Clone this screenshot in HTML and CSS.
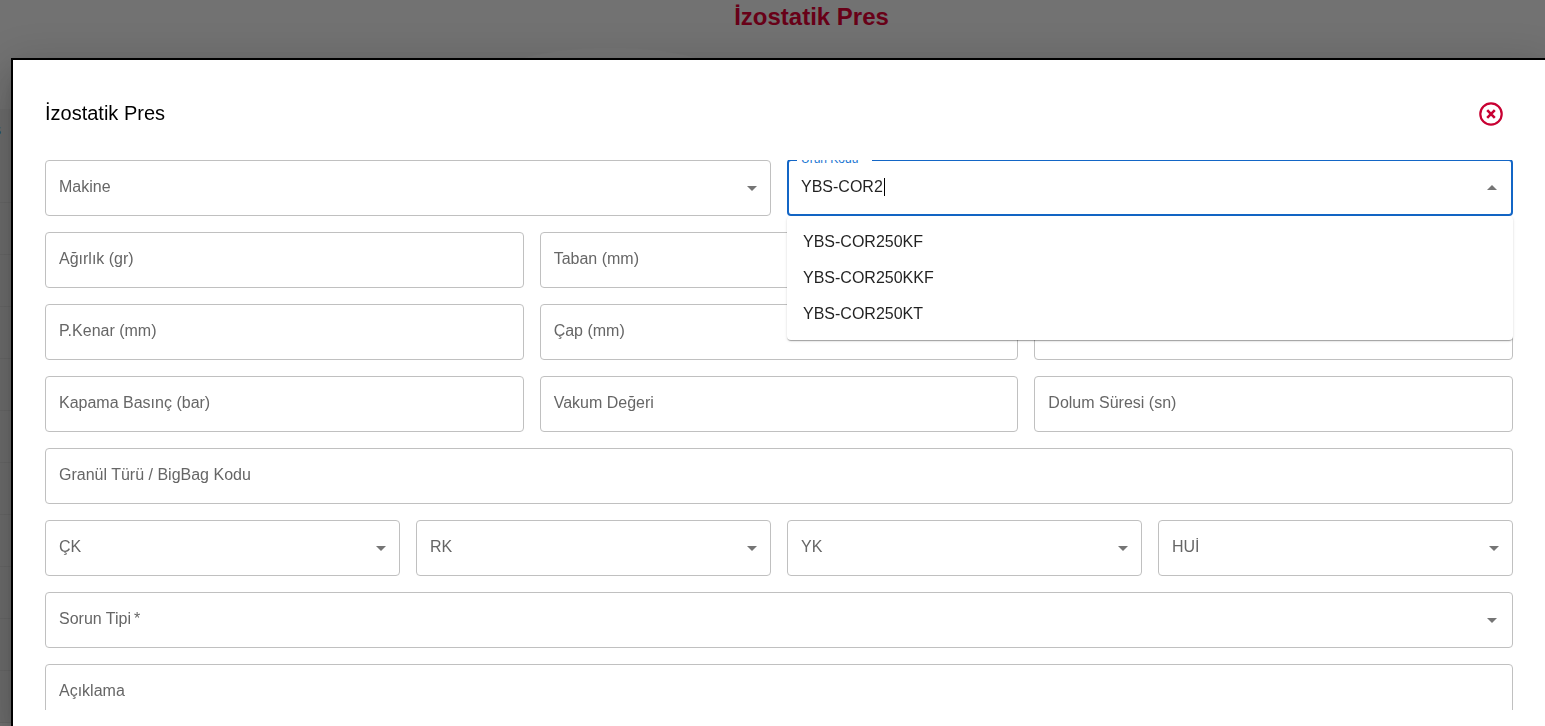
FILE: index.html
```html
<!DOCTYPE html>
<html lang="tr">
<head>
<meta charset="utf-8">
<meta name="viewport" content="width=device-width, initial-scale=1">
<title>İzostatik Pres</title>
<link rel="stylesheet" href="styles.css">
</head>
<body>
<main class="page">
  <h1 class="page-title">İzostatik Pres</h1>
  <div class="page-glow"></div>
  <div class="page-table">
    <div class="page-row page-row-head">s</div>
    <div class="page-row"></div>
    <div class="page-row"></div>
    <div class="page-row"></div>
    <div class="page-row"></div>
    <div class="page-row"></div>
    <div class="page-row"></div>
    <div class="page-row"></div>
    <div class="page-row"></div>
    <div class="page-row"></div>
    <div class="page-row"></div>
  </div>
</main>
<div class="backdrop"></div>
<section class="dialog" role="dialog" aria-labelledby="dialog-title">
  <header class="dialog-header">
    <h2 class="dialog-title" id="dialog-title">İzostatik Pres</h2>
    <button class="close" type="button" aria-label="Kapat">
      <svg viewBox="0 0 24 24" width="24" height="24" fill="none" stroke="currentColor">
        <circle cx="12" cy="12" r="10.7" stroke-width="2.2"/>
        <path d="M8.2 8.2l7.6 7.6M15.8 8.2l-7.6 7.6" stroke-width="2.6"/>
      </svg>
    </button>
  </header>
  <form class="form">
    <div class="row cols-2">
      <div class="field">
        <select class="control" id="makine"><option></option></select>
        <label class="label" for="makine">Makine</label>
        <svg class="arrow" viewBox="0 0 24 24"><path d="M7 10l5 5 5-5z"/></svg>
      </div>
      <div class="field field-active">
        <input class="control" id="urun" type="text" role="combobox" aria-expanded="true" aria-controls="urun-list" value="YBS-COR2" autocomplete="off">
        <label class="label" for="urun">Ürün Kodu</label>
        <span class="caret"></span>
        <button class="toggle" type="button" aria-label="Kapat"><svg viewBox="0 0 24 24"><path d="M7 15l5-5 5 5z"/></svg></button>
        <ul class="options" id="urun-list" role="listbox">
          <li class="option" role="option">YBS-COR250KF</li>
          <li class="option" role="option">YBS-COR250KKF</li>
          <li class="option" role="option">YBS-COR250KT</li>
        </ul>
      </div>
    </div>
    <div class="row cols-3">
      <div class="field"><input class="control" id="agirlik" type="text"><label class="label" for="agirlik">Ağırlık (gr)</label></div>
      <div class="field"><input class="control" id="taban" type="text"><label class="label" for="taban">Taban (mm)</label></div>
      <div class="field"><input class="control" id="olcu-a" type="text" aria-label="Ölçü"></div>
    </div>
    <div class="row cols-3">
      <div class="field"><input class="control" id="kenar" type="text"><label class="label" for="kenar">P.Kenar (mm)</label></div>
      <div class="field"><input class="control" id="cap" type="text"><label class="label" for="cap">Çap (mm)</label></div>
      <div class="field"><input class="control" id="olcu-b" type="text" aria-label="Ölçü"></div>
    </div>
    <div class="row cols-3">
      <div class="field"><input class="control" id="basinc" type="text"><label class="label" for="basinc">Kapama Basınç (bar)</label></div>
      <div class="field"><input class="control" id="vakum" type="text"><label class="label" for="vakum">Vakum Değeri</label></div>
      <div class="field"><input class="control" id="dolum" type="text"><label class="label" for="dolum">Dolum Süresi (sn)</label></div>
    </div>
    <div class="row">
      <div class="field"><input class="control" id="granul" type="text"><label class="label" for="granul">Granül Türü / BigBag Kodu</label></div>
    </div>
    <div class="row cols-4">
      <div class="field">
        <select class="control" id="ck"><option></option></select>
        <label class="label" for="ck">ÇK</label>
        <svg class="arrow" viewBox="0 0 24 24"><path d="M7 10l5 5 5-5z"/></svg>
      </div>
      <div class="field">
        <select class="control" id="rk"><option></option></select>
        <label class="label" for="rk">RK</label>
        <svg class="arrow" viewBox="0 0 24 24"><path d="M7 10l5 5 5-5z"/></svg>
      </div>
      <div class="field">
        <select class="control" id="yk"><option></option></select>
        <label class="label" for="yk">YK</label>
        <svg class="arrow" viewBox="0 0 24 24"><path d="M7 10l5 5 5-5z"/></svg>
      </div>
      <div class="field">
        <select class="control" id="hui"><option></option></select>
        <label class="label" for="hui">HUİ</label>
        <svg class="arrow" viewBox="0 0 24 24"><path d="M7 10l5 5 5-5z"/></svg>
      </div>
    </div>
    <div class="row">
      <div class="field">
        <input class="control" id="sorun" type="text" role="combobox" aria-expanded="false">
        <label class="label" for="sorun">Sorun Tipi<span class="required">*</span></label>
        <button class="toggle" type="button" aria-label="Aç"><svg viewBox="0 0 24 24"><path d="M7 10l5 5 5-5z"/></svg></button>
      </div>
    </div>
    <div class="row">
      <div class="field"><textarea class="control control-area" id="aciklama"></textarea><label class="label" for="aciklama">Açıklama</label></div>
    </div>
  </form>
</section>
</body>
</html>
```

FILE: styles.css
```css
* {
  box-sizing: border-box;
}

body {
  margin: 0;
  height: 100vh;
  overflow: hidden;
  font-family: "Liberation Sans", Arial, sans-serif;
  font-size: 16px;
  color: rgba(0, 0, 0, 0.87);
  background: #e4e4e4;
}

.page {
  height: 100vh;
  overflow: hidden;
  padding-left: 78px;
}

.page-title {
  margin: 0;
  padding-top: 3px;
  font-size: 24px;
  line-height: 28px;
  text-align: center;
  color: #d00030;
}

.page-glow {
  position: absolute;
  top: 48px;
  left: 480px;
  width: 260px;
  height: 80px;
  border-radius: 50%;
  background: #e9e9e9;
}

.page-table {
  position: absolute;
  top: 109px;
  left: 0;
  right: 0;
  background: #dcdcdc;
}

.page-row {
  height: 52px;
  border-bottom: 1px solid #d0d0d0;
}

.page-row-head {
  height: 94px;
  padding-top: 12px;
  text-indent: -7px;
  color: #1976d2;
}

.backdrop {
  position: fixed;
  inset: 0;
  background: rgba(0, 0, 0, 0.5);
}

.dialog {
  position: fixed;
  top: 58px;
  left: 11px;
  right: -2px;
  bottom: 0;
  display: flex;
  flex-direction: column;
  padding-bottom: 16px;
  border: 2px solid #000;
  border-bottom: 0;
  background: #fff;
  box-shadow: 0 11px 15px -7px rgba(0, 0, 0, 0.2), 0 24px 38px 3px rgba(0, 0, 0, 0.14), 0 9px 46px 8px rgba(0, 0, 0, 0.12);
}

.dialog-header {
  display: flex;
  align-items: center;
  justify-content: space-between;
  height: 100px;
  padding: 8px 42px 0 32px;
  flex: none;
}

.dialog-title {
  margin: 0;
  padding-bottom: 2px;
  font-size: 20px;
  line-height: 32px;
  font-weight: 400;
  color: #000;
}

.close {
  display: flex;
  padding: 0;
  border: 0;
  background: none;
  color: #c80032;
  cursor: pointer;
}

.form {
  flex: 1;
  min-height: 0;
  overflow: hidden;
  display: flex;
  flex-direction: column;
  gap: 16px;
  padding: 0 32px;
}

.row {
  display: grid;
  flex: none;
  gap: 16px;
}

.cols-2 {
  grid-template-columns: repeat(2, 1fr);
}

.cols-3 {
  grid-template-columns: repeat(3, 1fr);
}

.cols-4 {
  grid-template-columns: repeat(4, 1fr);
}

.field {
  position: relative;
  display: grid;
  align-items: center;
}

.field > .control,
.field > .label {
  grid-area: 1 / 1;
}

.control {
  width: 100%;
  height: 56px;
  margin: 0;
  padding: 0 14px;
  border: 1px solid #c0c0c0;
  border-radius: 4px;
  outline: 0;
  appearance: none;
  resize: none;
  background: transparent;
  font: inherit;
  color: inherit;
}

.control-area {
  display: block;
  height: 128px;
}

.label {
  align-self: start;
  justify-self: start;
  padding: 16px 14px;
  line-height: 22px;
  color: #666;
  pointer-events: none;
}

.required {
  padding-left: 3px;
}

.arrow,
.toggle {
  position: absolute;
  top: 16px;
  width: 24px;
  height: 24px;
  fill: #757575;
}

.arrow {
  right: 7px;
  pointer-events: none;
}

.toggle {
  right: 9px;
  padding: 0;
  border: 0;
  background: none;
}

.toggle svg {
  display: block;
}

.field-active {
  margin-top: -1px;
}

.field-active .control {
  height: 57px;
  padding: 0 12px 2px;
  border: 2px solid #1366c6;
}

.field-active .label {
  margin: -8px 0 0 10px;
  padding: 0 14px 0 4px;
  font-size: 12px;
  line-height: 16px;
  background: #fff;
  color: #1976d2;
}

.caret {
  position: absolute;
  top: 19px;
  left: 97px;
  width: 1px;
  height: 18px;
  background: #000;
}

.options {
  position: absolute;
  z-index: 1;
  top: 100%;
  left: 0;
  right: 0;
  margin: 0;
  padding: 8px 0;
  list-style: none;
  border-radius: 4px;
  background: #fff;
  box-shadow: 0 2px 1px -1px rgba(0, 0, 0, 0.2), 0 1px 1px 0 rgba(0, 0, 0, 0.14), 0 1px 3px 0 rgba(0, 0, 0, 0.12);
}

.option {
  padding: 6px 16px;
  line-height: 24px;
}
```
